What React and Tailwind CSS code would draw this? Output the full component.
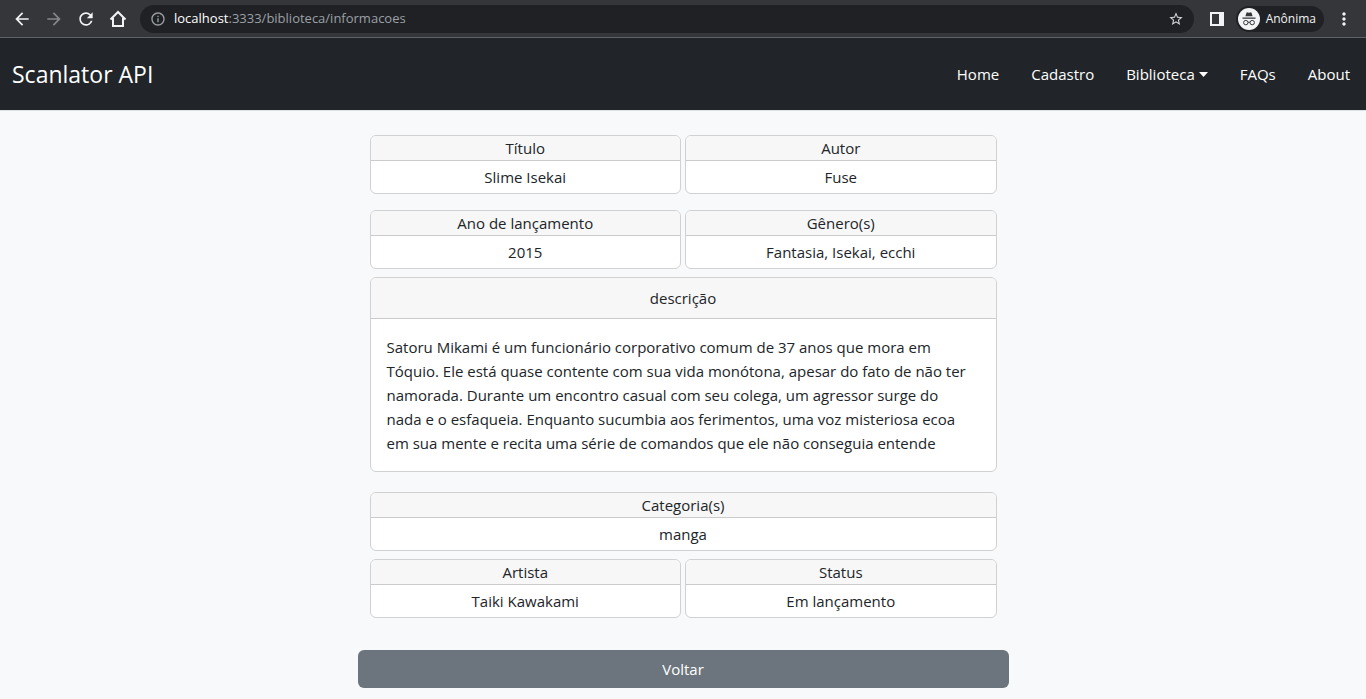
import React from "react";
import { MdArrowBack, MdArrowForward, MdRefresh, MdInfoOutline, MdStarBorder, MdMoreVert } from "react-icons/md";

function HomeIcon() {
  return (
    <svg width="18" height="18" viewBox="0 0 18 18" fill="none" stroke="currentColor" strokeWidth="2">
      <path d="M1.5 9.5 9 2l7.500 7.500M4 8v8h10V8" />
    </svg>
  );
}

function SidePanelIcon() {
  return (
    <svg width="14" height="14" viewBox="0 0 14 14" fill="currentColor" shapeRendering="crispEdges">
      <path fillRule="evenodd" d="M0 0h14v14H0zM2 2v10h7V2z" />
    </svg>
  );
}

function IncognitoIcon() {
  return (
    <svg width="22" height="22" viewBox="0 0 22 22">
      <circle cx="11" cy="11" r="11" fill="#f1f3f4" />
      <path d="M7.400 8.300 8.400 5c.2-.6.7-.8 1.200-.6l1.400.4 1.400-.4c.5-.2 1 0 1.200.6l1 3.300zM4.500 9.600h13v1.200h-13z" fill="#35363a" />
      <g fill="none" stroke="#35363a" strokeWidth="1">
        <circle cx="7.800" cy="14.600" r="2.200" />
        <circle cx="14.200" cy="14.600" r="2.200" />
        <path d="M10 14.400q1-.7 2 0" />
      </g>
    </svg>
  );
}

function BrowserBar() {
  return (
    <div className="flex h-[38px] items-center border-b border-[#5f6368] bg-[#35363a] px-3 text-[#f1f3f4]">
      <div className="flex gap-3">
        <button aria-label="Voltar à página anterior" className="flex size-5 items-center justify-center">
          <MdArrowBack size={20} />
        </button>
        <button aria-label="Avançar" className="flex size-5 items-center justify-center text-[#85868a]">
          <MdArrowForward size={20} />
        </button>
        <button aria-label="Recarregar" className="flex size-5 items-center justify-center">
          <MdRefresh size={20} />
        </button>
        <button aria-label="Página inicial" className="flex size-5 items-center justify-center">
          <HomeIcon />
        </button>
      </div>
      <div className="ml-3 flex h-7 flex-1 items-center rounded-full bg-[#202124] px-2.5 text-[#9aa0a6]">
        <MdInfoOutline size={16} />
        <div className="ml-2 flex-1 text-[13px]">
          <span className="text-white">localhost</span>:3333/biblioteca/informacoes
        </div>
        <button aria-label="Adicionar aos favoritos" className="text-[#d5d7da]">
          <MdStarBorder size={16} />
        </button>
      </div>
      <button aria-label="Painel lateral" className="ml-4">
        <SidePanelIcon />
      </button>
      <button className="ml-3 flex h-[26px] items-center gap-1.5 rounded-full bg-[#202124] pr-2 pl-0.5 text-xs">
        <IncognitoIcon />
        Anônima
      </button>
      <button aria-label="Menu" className="ml-2.5">
        <MdMoreVert size={20} />
      </button>
    </div>
  );
}

function NavLink({ children }) {
  return (
    <a href="#" className="flex items-center gap-1">
      {children}
    </a>
  );
}

function Navbar() {
  return (
    <nav className="flex h-18 items-center justify-between bg-[#212529] pr-4 pl-3 text-white">
      <a href="#" className="text-[23px]">Scanlator API</a>
      <div className="flex gap-8 text-[15px]">
        <NavLink>Home</NavLink>
        <NavLink>Cadastro</NavLink>
        <NavLink>
          Biblioteca
          <svg width="9" height="5" viewBox="0 0 9 5" fill="currentColor">
            <path d="M0 0h9L4.500 5z" />
          </svg>
        </NavLink>
        <NavLink>FAQs</NavLink>
        <NavLink>About</NavLink>
      </div>
    </nav>
  );
}

function Card({ title, children }) {
  return (
    <section className="flex-1 overflow-hidden rounded-md border border-[#d0d1d2] bg-white text-center">
      <h2 className="border-b border-[#cbcbcb] bg-[#f7f7f7]">{title}</h2>
      <p className="py-1">{children}</p>
    </section>
  );
}

export default function App() {
  return (
    <div className="min-h-screen bg-[#f8f9fb] font-['Open_Sans','Noto_Sans',sans-serif]">
      <BrowserBar />
      <Navbar />
      <main className="border-t border-[#dee2e6] px-8 pt-6 pb-3 text-[15px]/6 text-[#212529]">
        <div className="mx-auto w-1/2">
          <div className="px-3">
            <div className="mb-4 flex gap-1">
              <Card title="Título">Slime Isekai</Card>
              <Card title="Autor">Fuse</Card>
            </div>
            <div className="mb-2 flex gap-1">
              <Card title="Ano de lançamento">2015</Card>
              <Card title="Gênero(s)">Fantasia, Isekai, ecchi</Card>
            </div>
            <section className="mb-5 overflow-hidden rounded-md border border-[#d0d1d2] bg-white">
              <h2 className="border-b border-[#cbcbcb] bg-[#f7f7f7] py-2 text-center">descrição</h2>
              <p className="py-4 pr-6 pl-4">
                Satoru Mikami é um funcionário corporativo comum de 37 anos que mora em Tóquio. Ele está quase
                contente com sua vida monótona, apesar do fato de não ter namorada. Durante um encontro casual com
                seu colega, um agressor surge do nada e o esfaqueia. Enquanto sucumbia aos ferimentos, uma voz
                misteriosa ecoa em sua mente e recita uma série de comandos que ele não conseguia entende
              </p>
            </section>
            <div className="mb-2 flex">
              <Card title="Categoria(s)">manga</Card>
            </div>
            <div className="mb-8 flex gap-1">
              <Card title="Artista">Taiki Kawakami</Card>
              <Card title="Status">Em lançamento</Card>
            </div>
          </div>
          <button className="w-full rounded-md bg-[#6c757d] py-[7px] text-white">Voltar</button>
        </div>
      </main>
    </div>
  );
}
